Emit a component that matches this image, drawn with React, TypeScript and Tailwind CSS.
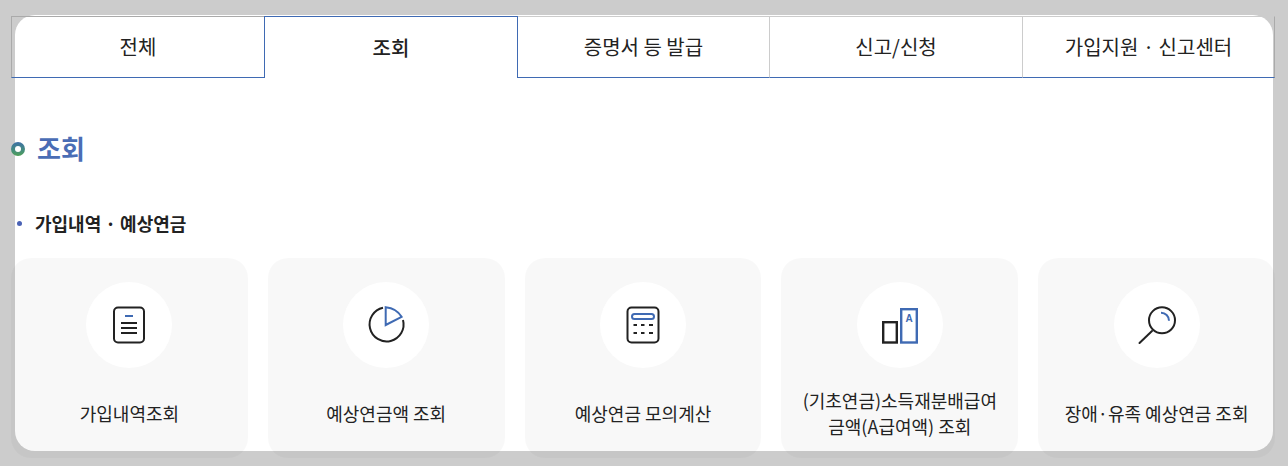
const BLUE = "#3f6ab3";
const INK = "#222222";

function DocIcon() {
  return (
    <svg width="40" height="40" viewBox="0 0 40 40" fill="none">
      <rect x="5" y="2.5" width="30" height="35" rx="4" stroke={INK} strokeWidth="2" />
      <path d="M16 11h8" stroke={BLUE} strokeWidth="2" />
      <path d="M12 18h16M12 23h16M12 28h16" stroke={INK} strokeWidth="2" />
    </svg>
  );
}
function PieIcon() {
  return (
    <svg width="40" height="40" viewBox="0 0 40 40" fill="none">
      <path d="M17 2.8A17 17 0 1 0 37 15" stroke={INK} strokeWidth="2" />
      <path d="M19.7 20V2.2C27 3 32.5 6.5 35.6 11.8Z" stroke={BLUE} strokeWidth="2" />
    </svg>
  );
}
function CalcIcon() {
  return (
    <svg width="40" height="40" viewBox="0 0 40 40" fill="none">
      <rect x="4.5" y="2.5" width="31" height="35" rx="4" stroke={INK} strokeWidth="2" />
      <rect x="9" y="9" width="22" height="5" rx="2.5" stroke={BLUE} strokeWidth="2" />
      <path d="M10.5 20h3.5M18 20h3.5M26 20h4M10.5 28h3.5M18 28h3.5M26 28h4" stroke={INK} strokeWidth="2" />
    </svg>
  );
}
function AmountIcon() {
  return (
    <svg width="40" height="40" viewBox="0 0 40 40" fill="none">
      <rect x="3.2" y="17.2" width="13.6" height="20.3" stroke={INK} strokeWidth="2.4" />
      <rect x="21.2" y="4.2" width="15.6" height="33.3" stroke={BLUE} strokeWidth="2.4" />
      <text x="29" y="16.8" textAnchor="middle" fontSize="10" fontWeight="700" fill={BLUE} fontFamily="Liberation Sans, sans-serif">A</text>
    </svg>
  );
}
function SearchIcon() {
  return (
    <svg width="40" height="40" viewBox="0 0 40 40" fill="none">
      <circle cx="25" cy="15.3" r="13" stroke={INK} strokeWidth="2" />
      <path d="M15 26L2.5 38" stroke={INK} strokeWidth="2" strokeLinecap="round" />
      <path d="M24 7.7A8 8 0 0 1 32 15.7" stroke={BLUE} strokeWidth="2" />
    </svg>
  );
}

const cards = [
  { icon: <DocIcon />, label: ["가입내역조회"] },
  { icon: <PieIcon />, label: ["예상연금액 조회"] },
  { icon: <CalcIcon />, label: ["예상연금 모의계산"] },
  { icon: <AmountIcon />, label: ["(기초연금)소득재분배급여", "금액(A급여액) 조회"] },
  { icon: <SearchIcon />, label: ["장애·유족 예상연금 조회"] },
];

export default function App() {
  return (
    <div
      className="h-[466px] w-[1288px] overflow-hidden bg-[#cccccc] pl-[15px] pt-[15px] text-[#222222]"
      style={{ fontFamily: '"Noto Sans CJK KR", "Noto Sans", sans-serif' }}
    >
      <div className="h-[436px] w-[1258px] rounded-[20px] bg-white pt-px">
        <div className="ml-[-4px] w-[1264px]">
          <div className="flex h-[62px] w-[1264px] text-[20px]">
            <div className="flex w-[253px] items-center justify-center border-t border-b border-l border-t-[#aaaaaa] border-l-[#aaaaaa] border-b-[#3f6ab3]">전체</div>
            <div className="flex w-[254px] items-center justify-center border-x border-t border-[#3f6ab3] font-medium">조회</div>
            <div className="flex w-[252px] items-center justify-center border-y border-r border-t-[#cccccc] border-r-[#cccccc] border-b-[#3f6ab3]">증명서 등 발급</div>
            <div className="flex w-[253px] items-center justify-center border-y border-r border-t-[#cccccc] border-r-[#cccccc] border-b-[#3f6ab3]">신고/신청</div>
            <div className="flex w-[252px] items-center justify-center border-y border-r border-t-[#cccccc] border-r-[#aaaaaa] border-b-[#3f6ab3]">가입지원 · 신고센터</div>
          </div>

          <div className="mt-[54px] flex h-[34px] items-center gap-3">
            <span className="flex h-[14px] w-[14px] items-center justify-center rounded-full bg-gradient-to-b from-[#3f6fa5] to-[#4f9f55]">
              <span className="h-[6px] w-[6px] rounded-full bg-white" />
            </span>
            <h2 className="mt-[-4px] text-[26px] font-bold text-[#4a6db5]">조회</h2>
          </div>

          <div className="mt-[44px] flex h-[26px] items-center">
            <span className="ml-[6px] h-[5px] w-[5px] rounded-full bg-[#4a62b5]" />
            <h3 className="ml-[13px] text-[18px] font-bold">가입내역 · 예상연금</h3>
          </div>

          <div className="mt-[22px] grid grid-cols-5 gap-5">
            {cards.map((c, i) => (
              <div key={i} className="flex h-[200px] flex-col items-center rounded-[20px] bg-black/[0.026] pt-6">
                <div className="flex h-[86px] w-[86px] items-center justify-center rounded-full bg-white">{c.icon}</div>
                <div className="mt-[18px] flex h-[54px] flex-col items-center justify-center text-[18px] leading-[26px]">
                  {c.label.map((l) => (
                    <span key={l}>{l}</span>
                  ))}
                </div>
              </div>
            ))}
          </div>
        </div>
      </div>
    </div>
  );
}
